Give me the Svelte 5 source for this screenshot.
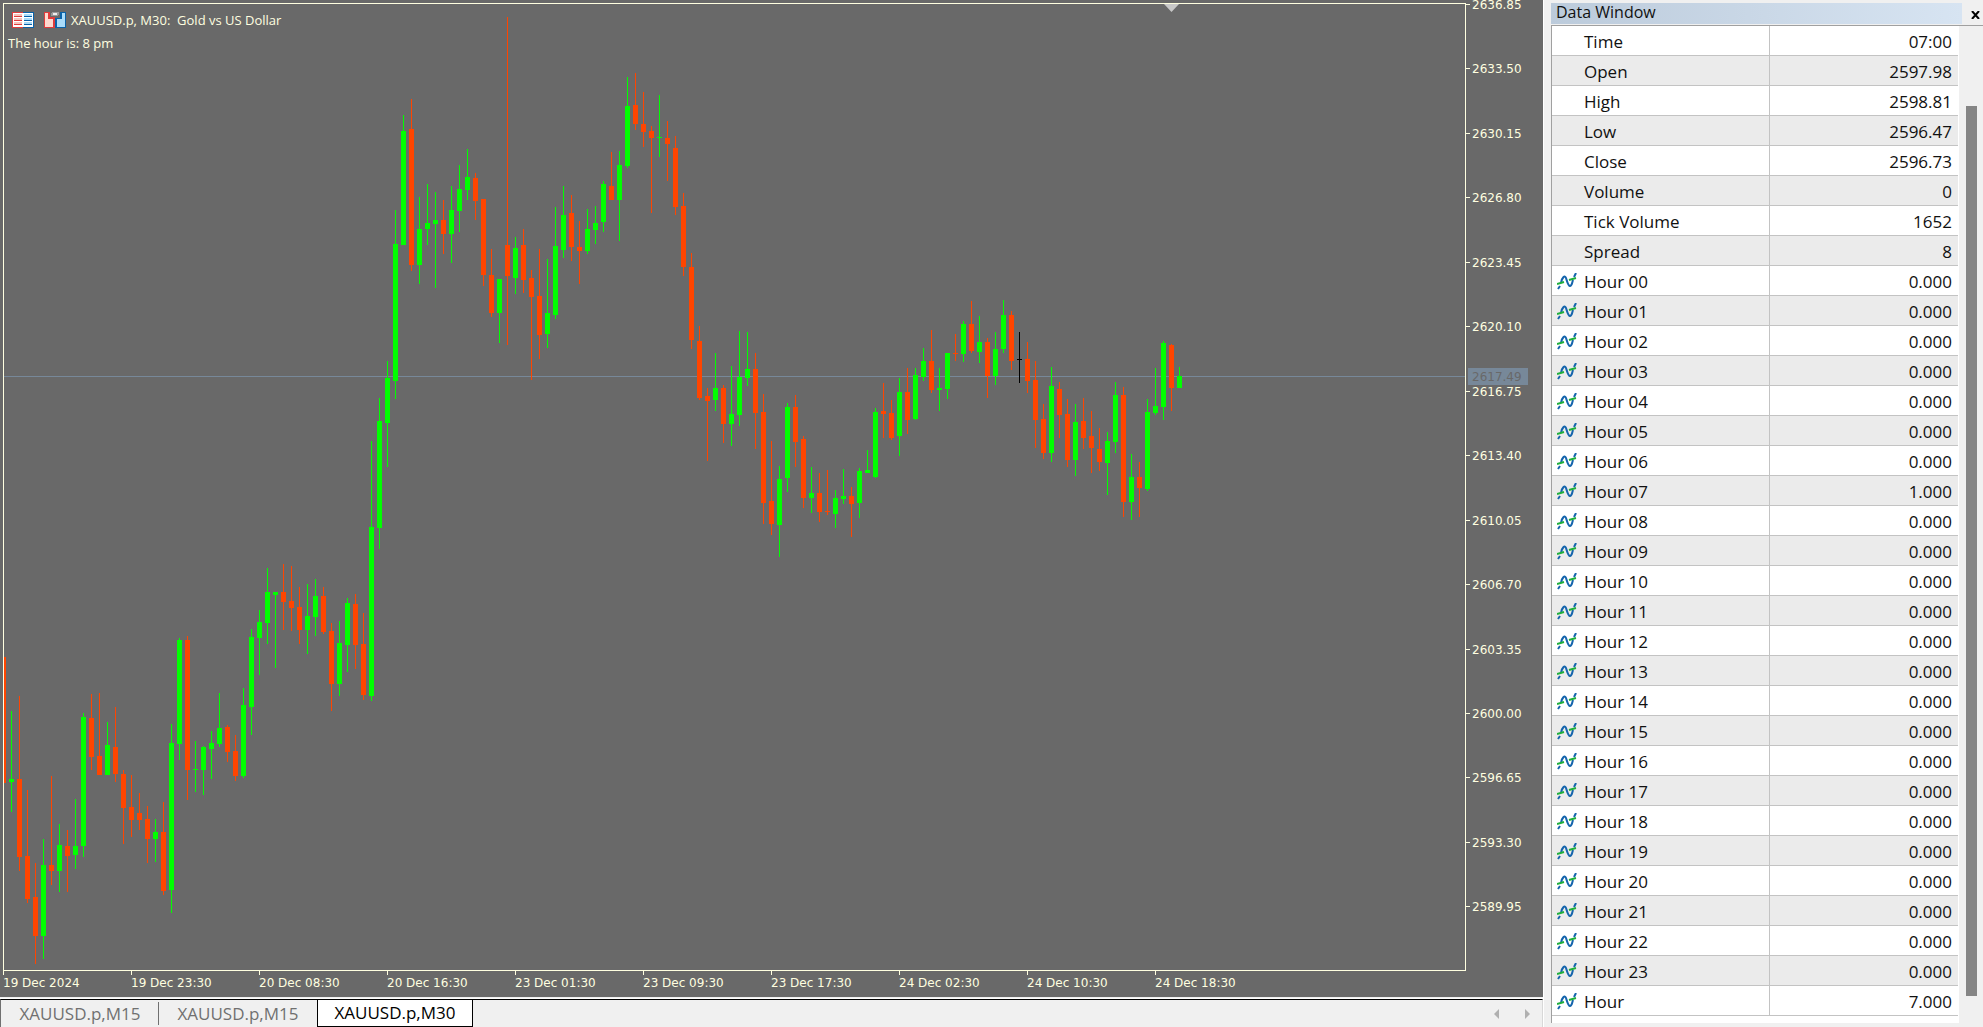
<script>
  // high, body top, body bottom, low (chart space), u = up, d = down, n = doji
  const bars = `
657 657 783 783 d|711 779 782 812 u|696 779 857 871 d|790 856 899 903 d|863 897 936 964 d
839 865 936 959 u|776 865 871 885 d|824 845 871 892 u|830 846 856 892 d|799 846 855 869 u
713 717 846 857 u|694 718 757 770 d|693 756 775 775 d|722 745 775 775 u|707 747 774 782 d
770 774 808 844 d|775 807 820 837 d|793 813 820 830 d|806 819 839 863 d|819 832 839 862 u
802 832 891 895 d|724 743 890 913 u|638 640 744 760 u|636 640 770 800 d|741 769 770 792 u
746 747 770 795 u|731 743 749 779 u|693 728 744 747 u|725 727 752 762 d|735 751 776 781 d
688 705 776 778 u|629 637 707 735 u|610 622 638 675 u|568 592 623 644 u|592 592 595 668 u
564 592 602 630 d|566 601 608 631 d|587 607 630 644 d|584 616 630 654 u|579 596 617 636 u
587 596 632 634 d|623 631 684 711 d|621 643 684 696 u|598 603 645 672 u|594 604 645 669 d
613 644 695 700 d|441 527 696 701 u|398 421 528 549 u|361 378 423 467 u|210 244 381 399 u
115 131 245 245 u|99 129 265 271 d|197 229 265 284 u|184 223 229 245 u|192 220 224 288 u
200 220 234 254 d|186 210 234 263 u|165 189 211 232 u|149 177 190 200 u|173 178 201 220 d
199 199 275 286 d|249 275 313 317 d|279 279 313 343 u|17 245 276 345 d|237 248 278 294 u
229 245 280 293 d|270 278 297 380 d|249 296 335 359 d|259 313 334 348 u|207 246 315 319 u
186 215 250 258 u|195 213 247 261 d|221 247 251 284 d|209 229 251 254 u|206 223 230 244 u
181 184 222 232 u|152 186 200 200 d|151 165 200 241 u|77 106 166 168 u|73 105 124 130 d
92 124 132 147 d|126 131 138 213 d|95 137 138 157 u|121 138 144 181 d|136 148 207 215 d
193 206 267 276 d|253 267 340 349 d|326 341 398 400 d|388 396 401 461 d|353 388 400 411 u
385 388 424 443 d|366 414 424 446 u|331 377 415 426 u|332 369 378 386 u|353 369 413 449 d
394 412 503 524 d|441 501 524 535 d|466 479 525 557 u|403 407 478 492 u|395 407 442 467 d
436 439 498 508 d|467 493 498 513 u|473 493 512 522 d|470 511 512 515 d|490 498 514 528 u
469 496 499 504 u|487 496 504 537 d|468 471 503 518 u|450 470 473 473 u|408 412 477 478 u
383 411 414 438 d|400 413 438 440 d|378 392 436 456 u|368 392 420 434 d|368 375 419 420 u
348 361 377 381 u|330 361 390 393 d|368 388 390 411 u|353 353 389 399 u|334 353 354 361 d
321 324 354 362 u|301 324 351 353 d|316 342 352 363 u|338 342 376 398 d|332 349 376 385 u
300 315 349 353 u|311 315 361 370 d|332 359 360 383 n|342 359 381 393 d|361 380 420 448 d
404 419 453 459 d|367 386 453 462 u|382 389 415 438 d|399 414 460 467 d|404 422 460 476 u
398 421 438 449 d|411 436 448 473 d|428 449 462 471 d|432 441 463 495 u|382 395 442 453 u
387 395 502 517 d|454 477 502 520 u|462 477 488 517 d|399 412 489 491 u|368 406 413 415 u
341 343 407 420 u|344 345 388 411 d|367 376 388 388 u`;

  const candles = bars
    .trim()
    .split(/[|\n]/)
    .map((bar, i) => {
      const [high, top, bottom, low, kind] = bar.split(' ');
      return { x: 3 + i * 8, high: +high, top: +top, bottom: +bottom, low: +low, kind };
    });

  const prices = Array.from({ length: 15 }, (_, i) => ({
    label: (2636.85 - i * 3.35).toFixed(2),
    y: Math.round(4 + i * 64.45),
  }));

  const times = [
    '19 Dec 2024', '19 Dec 23:30', '20 Dec 08:30', '20 Dec 16:30', '23 Dec 01:30',
    '23 Dec 09:30', '23 Dec 17:30', '24 Dec 02:30', '24 Dec 10:30', '24 Dec 18:30',
  ].map((label, i) => ({ label, x: 3 + i * 128 }));

  const quote = [
    ['Time', '07:00'],
    ['Open', '2597.98'],
    ['High', '2598.81'],
    ['Low', '2596.47'],
    ['Close', '2596.73'],
    ['Volume', '0'],
    ['Tick Volume', '1652'],
    ['Spread', '8'],
  ].map(([name, value]) => ({ name, value, buffer: false }));

  const currentHour = 7;
  const hours = Array.from({ length: 24 }, (_, h) => ({
    name: `Hour ${String(h).padStart(2, '0')}`,
    value: (h === currentHour ? 1 : 0).toFixed(3),
    buffer: true,
  }));

  const rows = [...quote, ...hours, { name: 'Hour', value: currentHour.toFixed(3), buffer: true }];

  const tabs = ['XAUUSD.p,M15', 'XAUUSD.p,M15', 'XAUUSD.p,M30'];
  let active = 2;
</script>

<div class="terminal">
  <main>
    <svg class="chart" viewBox="0 0 1543 997" role="img" aria-label="XAUUSD.p M30 chart">
      <g shape-rendering="crispEdges">
        <rect class="line" x="3" y="376" width="1463" height="1" />
        {#each candles as c}
          <g class={c.kind}>
            <rect x={c.x} y={c.high} width="1" height={c.low - c.high} />
            <rect x={c.x - 2} y={c.top} width="5" height={c.bottom - c.top} />
          </g>
        {/each}
        <rect class="bg" x="0" y="600" width="3" height="300" />
        <g class="axis">
          <rect x="3" y="3" width="1463" height="1" />
          <rect x="3" y="970" width="1463" height="1" />
          <rect x="3" y="3" width="1" height="968" />
          <rect x="1465" y="3" width="1" height="968" />
          {#each prices as p}
            <rect x="1466" y={p.y} width="4" height="1" />
          {/each}
          {#each times as t}
            <rect x={t.x} y="971" width="1" height="4" />
          {/each}
        </g>
        <rect class="bid" x="1468" y="368" width="60" height="17" />
      </g>
      <path class="shift" d="M1164 4h15l-7.500 8z" />

      <g class="scale">
        {#each prices as p}
          <text x="1472" y={p.y + 5}>{p.label}</text>
        {/each}
        {#each times as t}
          <text x={t.x} y="987">{t.label}</text>
        {/each}
        <text class="bidtext" x="1472" y="381">2617.49</text>
      </g>

      <!-- depth of market -->
      <g transform="translate(12 12)" shape-rendering="crispEdges">
        <rect width="11" height="16" fill="#e03c3c" />
        <rect x="11" width="11" height="16" fill="#0a62a8" />
        <rect x="1" y="1" width="20" height="14" fill="#fff" />
        <path fill="#f5c4bc" d="M2 2h8v2h-8zM2 6h8v2h-8zM2 10h8v3h-8z" />
        <path fill="#e03c3c" d="M2 4h8v1h-8zM2 8h8v1h-8zM2 12h8v1h-8z" />
        <path fill="#a9dcfb" d="M12 2h8v2h-8zM12 6h8v2h-8zM12 10h8v3h-8z" />
        <path fill="#0a62a8" d="M12 4h8v1h-8zM12 8h8v1h-8zM12 12h8v1h-8z" />
      </g>
      <!-- one click trading -->
      <g transform="translate(44 11)" shape-rendering="crispEdges">
        <path fill="#e03c3c" d="M0 1h6v5h5v11h-11z" />
        <path fill="#fdd9cf" d="M1 2h3v6h5v8h-8z" />
        <path fill="#0a62a8" d="M16 1h6v16h-11v-10h5z" />
        <path fill="#a9dcfb" d="M18 2h3v14h-8v-8h5z" />
        <rect x="7" y="1" width="8" height="4" rx="2" fill="#9a9a9a" />
        <rect x="9" y="2" width="4" height="2" fill="#eee" />
      </g>
      <g class="title">
        <text x="71" y="25" xml:space="preserve">XAUUSD.p, M30:  Gold vs US Dollar</text>
        <text x="8" y="48">The hour is: 8 pm</text>
      </g>
    </svg>

    <nav>
      {#each tabs as tab, i}
        <button class="tab" class:active={active === i} on:click={() => (active = i)}>{tab}</button>
      {/each}
      <div class="arrows">
        <button aria-label="Previous tab"><svg width="5" height="10"><path d="M5 0v10l-5-5z" /></svg></button>
        <button aria-label="Next tab"><svg width="5" height="10"><path d="M0 0v10l5-5z" /></svg></button>
      </div>
    </nav>
  </main>

  <aside>
    <header>
      <h2>Data Window</h2>
      <button class="close" aria-label="Close">
        <svg width="9" height="8"><path d="M1 0l7 8M8 0l-7 8" /></svg>
      </button>
    </header>
    <div class="body">
      <div class="sheet">
        <table>
          <tbody>
            {#each rows as row}
              <tr>
                <th scope="row">
                  <span class="icon">
                    {#if row.buffer}
                      <svg width="20" height="17" viewBox="0 0 20 17">
                        <path class="blue" d="M1 16l2-3M4 10C5 4 8 2 9 5S11 13 13 13S15 10 16 7M17 4l2-4" />
                        <path class="green" d="M0 11l7-2M12 7l7-2" />
                      </svg>
                    {/if}
                  </span><span>{row.name}</span>
                </th>
                <td>{row.value}</td>
              </tr>
            {/each}
          </tbody>
        </table>
      </div>
      <div class="track"><div class="thumb"></div></div>
    </div>
  </aside>
</div>

<style>
  :global(body) {
    background: #f0f0f0;
  }
  .terminal {
    display: grid;
    grid-template-columns: 1fr 432px;
    column-gap: 8px;
    font-family: 'Open Sans', 'Noto Sans', sans-serif;
    color: #111;
  }
  main {
    display: flex;
    flex-direction: column;
    min-width: 0;
    box-shadow: 1px 0 #fff;
  }
  .chart {
    display: block;
    width: 100%;
    background: #696969;
  }
  .bg { fill: #696969; }
  .line, .bid { fill: #778899; }
  .u { fill: #00ff00; }
  .d { fill: #ff4500; }
  .n { fill: #000; }
  .axis, .scale, .title { fill: #ffffe0; }
  .shift { fill: #c8c8c8; }
  .scale {
    font-family: 'DejaVu Sans', sans-serif;
    font-size: 12px;
  }
  .bidtext { fill: #696969; }
  .title {
    font-size: 13px;
  }

  nav {
    display: flex;
    height: 27px;
    border-top: 1px solid #000;
    border-left: 1px solid #707070;
    border-right: 1px solid #d8d8d8;
    box-shadow: 0 -1px #fff;
    margin-top: 2px;
  }
  button {
    border: none;
    background: none;
    padding: 0;
    font-family: inherit;
  }
  .tab {
    position: relative;
    width: 158px;
    font-size: 17px;
    line-height: 28px;
    color: #707070;
  }
  .tab:first-child::after {
    content: '';
    position: absolute;
    right: 0;
    top: 2px;
    width: 1px;
    height: 23px;
    background: #707070;
  }
  .tab.active {
    width: 156px;
    background: #fff;
    color: #000;
    border: 1px solid #000;
    border-top: none;
    line-height: 26px;
  }
  .arrows {
    display: flex;
    align-items: center;
    gap: 26px;
    margin-left: auto;
    padding-right: 12px;
  }
  .arrows svg {
    display: block;
    fill: #b0b0b0;
  }

  aside {
    display: flex;
    flex-direction: column;
    padding-top: 3px;
  }
  header {
    display: flex;
    justify-content: space-between;
    height: 22px;
    border-bottom: 1px solid #a0a0a0;
  }
  h2 {
    flex: 1;
    height: 21px;
    margin: 0;
    padding-left: 5px;
    font-size: 16px;
    line-height: 18px;
    font-weight: normal;
    background: linear-gradient(90deg, #bccbdb, #d7e4f2);
  }
  .close {
    width: 21px;
    padding: 0 3px 0 9px;
  }
  .close path {
    stroke: #000;
    stroke-width: 2;
  }
  .body {
    display: flex;
    flex: 1;
  }
  .sheet {
    flex: 1;
    margin-bottom: 4px;
    padding: 0 1px 7px 0;
    border-left: 1px solid #a0a0a0;
    background: #fff;
  }
  table {
    width: 100%;
    border-collapse: separate;
    border-spacing: 0;
    table-layout: fixed;
    font-size: 17px;
    line-height: 27px;
  }
  th, td {
    height: 27px;
    padding: 2px 0 0;
    border-bottom: 1px solid #c3c3c3;
    font-weight: normal;
  }
  th {
    width: 217px;
    border-right: 1px solid #c3c3c3;
    text-align: left;
    white-space: nowrap;
  }
  td {
    padding-right: 6px;
    text-align: right;
  }
  tr:nth-child(even) {
    background: #ebebeb;
  }
  .icon {
    display: inline-block;
    width: 27px;
    height: 17px;
    padding-left: 5px;
    line-height: 0;
    vertical-align: -2px;
  }
  .icon path {
    fill: none;
    stroke-width: 2;
  }
  .blue { stroke: #1464ac; }
  .green { stroke: #1fae3c; }
  .track {
    width: 24px;
    padding: 80px 0 31px;
    box-sizing: border-box;
    display: flex;
    justify-content: flex-start;
  }
  .thumb {
    width: 11px;
    margin-left: 7px;
    background: #858585;
  }
</style>
